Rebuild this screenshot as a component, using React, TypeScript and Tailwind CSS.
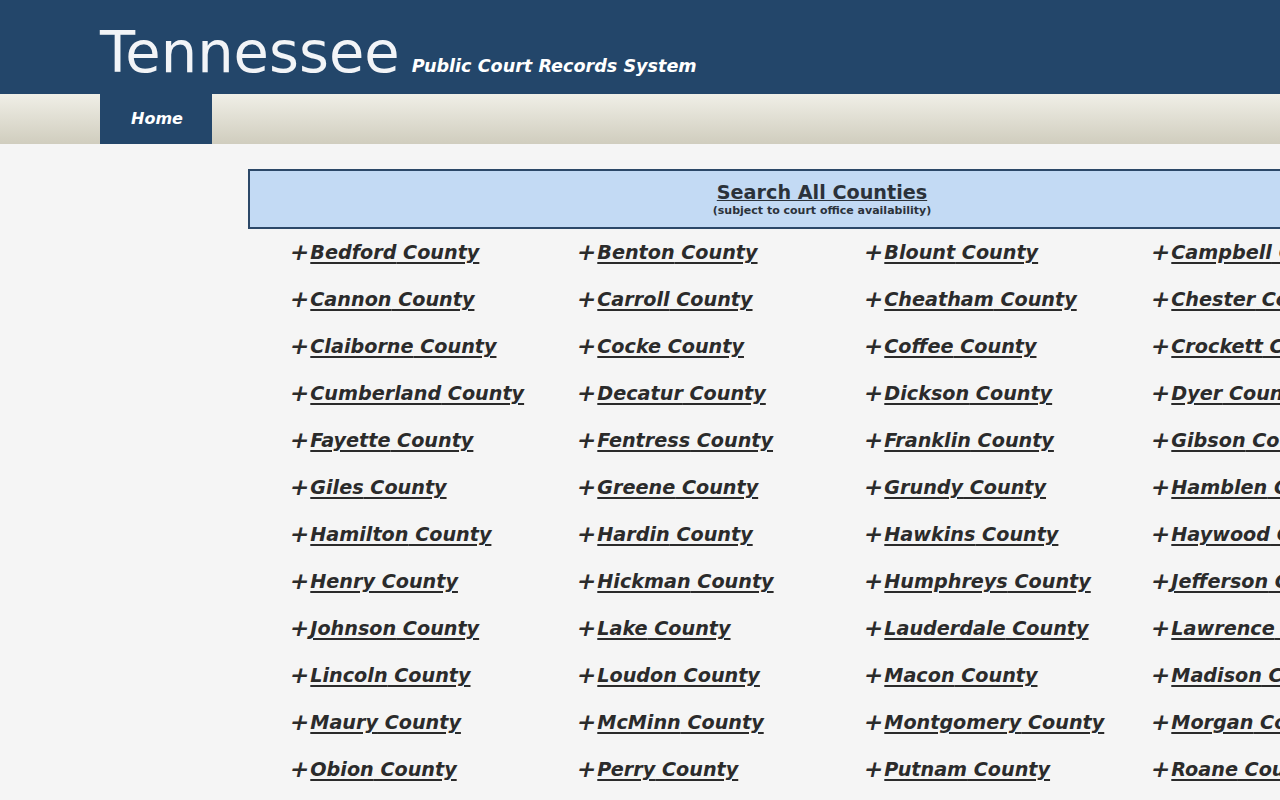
import React from "react";

const counties = [
  "Bedford", "Benton", "Blount", "Campbell",
  "Cannon", "Carroll", "Cheatham", "Chester",
  "Claiborne", "Cocke", "Coffee", "Crockett",
  "Cumberland", "Decatur", "Dickson", "Dyer",
  "Fayette", "Fentress", "Franklin", "Gibson",
  "Giles", "Greene", "Grundy", "Hamblen",
  "Hamilton", "Hardin", "Hawkins", "Haywood",
  "Henry", "Hickman", "Humphreys", "Jefferson",
  "Johnson", "Lake", "Lauderdale", "Lawrence",
  "Lincoln", "Loudon", "Macon", "Madison",
  "Maury", "McMinn", "Montgomery", "Morgan",
  "Obion", "Perry", "Putnam", "Roane",
  "Robertson", "Rutherford", "Sevier", "Shelby",
  "Sullivan", "Sumner", "Tipton", "Warren",
  "Washington", "Weakley", "Williamson", "Wilson",
];

export default function App() {
  return (
    <div
      className="w-[1280px] h-[800px] overflow-hidden bg-[#f5f5f5]"
      style={{ fontFamily: '"DejaVu Sans", sans-serif' }}
    >
      <header className="h-[94px] bg-[#23466a] pl-[100px] pt-[24px] flex items-baseline gap-[12px]">
        <h1 className="text-[57.5px] leading-none text-[#f2f4f7] font-normal">Tennessee</h1>
        <span className="text-[17.6px] font-bold italic text-white leading-none">
          Public Court Records System
        </span>
      </header>
      <nav className="h-[50px] bg-gradient-to-b from-[#f0efe7] to-[#d0cdbe] pl-[100px] flex">
        <a className="w-[112px] h-full bg-[#23466a] flex items-center justify-center pl-[2px] text-white text-[16px] font-bold italic">
          Home
        </a>
      </nav>
      <main className="pl-[248px] pt-[25px] w-[1400px]">
        <div className="w-[1148px]">
          <div className="h-[60px] border-2 border-[#2c4868] bg-[#c3daf4] flex flex-col items-center justify-center text-[#2b323a]">
            <a className="text-[19.2px] font-bold underline leading-[22px]">Search All Counties</a>
            <span className="text-[11px] font-bold leading-[13px]">(subject to court office availability)</span>
          </div>
          <div className="grid grid-cols-4 pt-[1px]">
            {counties.map((c) => (
              <div key={c} className="h-[47px] flex items-center pl-[42px] text-[19.2px] font-bold italic text-[#2b2b2b] whitespace-nowrap">
                <span className="inline-block -skew-x-12 text-[23px] leading-none mr-[1px] mt-[-3px]">+</span>
                <a className="underline decoration-[1.5px] underline-offset-[3px]">{c} County</a>
              </div>
            ))}
          </div>
        </div>
      </main>
    </div>
  );
}
